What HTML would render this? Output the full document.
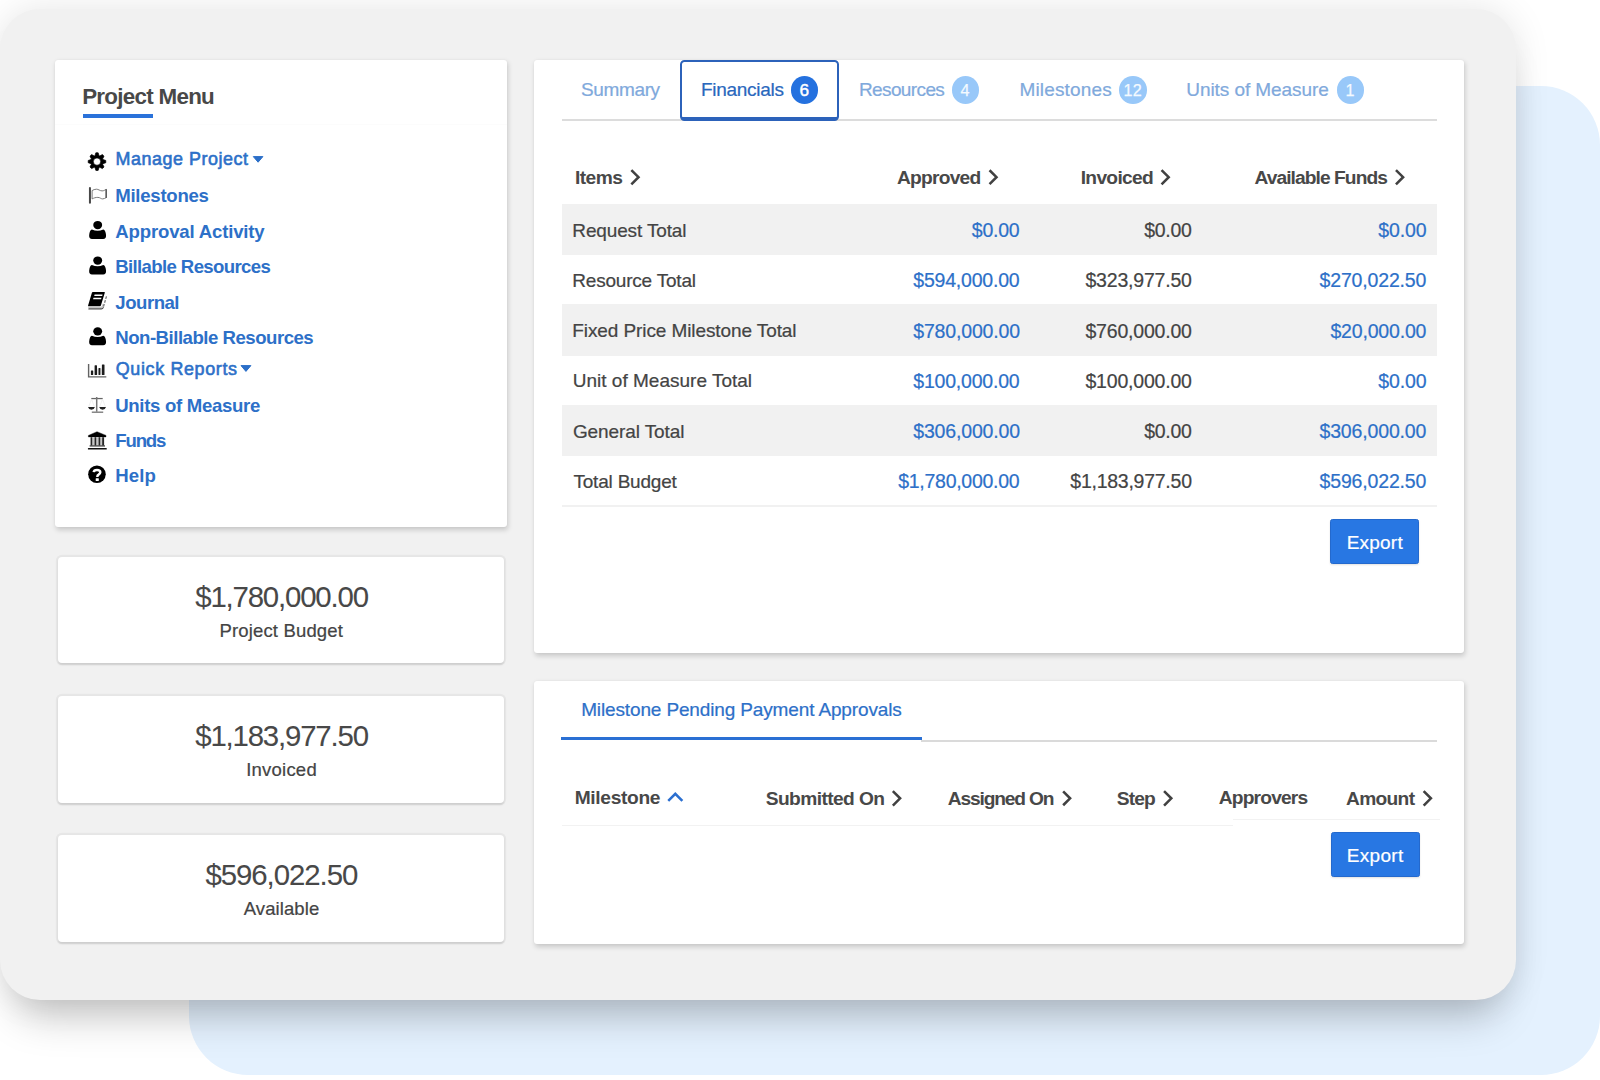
<!DOCTYPE html>
<html lang="en">
<head>
<meta charset="utf-8">
<title>Project Financials</title>
<style>
html,body{margin:0;padding:0}
body{width:1600px;height:1080px;position:relative;overflow:hidden;background:#fff;font-family:"Liberation Sans",sans-serif}
.a{position:absolute;box-sizing:border-box}
.t{position:absolute;white-space:nowrap;display:block;margin:0;padding:0;font-weight:400;text-decoration:none}
.bluebg{left:188.5px;top:86.3px;width:1411.2px;height:989.2px;border-radius:59px;background:#e4f1fe}
.panel{left:-0.3px;top:8.8px;width:1516.4px;height:991.3px;border-radius:40px;background:#f1f1f1;box-shadow:0 32px 42px -16px rgba(0,0,0,.22),0 0 36px rgba(0,0,0,.10)}
.card{background:#fff;border-radius:3px;box-shadow:1px 2.5px 5px rgba(0,0,0,.17),0 0 1.5px rgba(0,0,0,.06)}
.stat{background:#fff;border-radius:4px;box-shadow:0 0 0 2.2px rgba(0,0,0,.04),0 1.5px 2px rgba(0,0,0,.11)}
.row{left:561.5px;width:875.6px;background:#f1f1f1}
.btn{background:#2877e3;border:1px solid #2469cd;border-radius:2.5px;box-shadow:0 1px 2px rgba(0,0,0,.12)}
.badge{width:27.5px;height:27.5px;border-radius:50%;background:#98c8f9}
.badge.on{background:#2471df}
svg.a{overflow:visible}
</style>
</head>
<body>
<div class="a bluebg"></div>
<div class="a panel"></div>
<nav id="project-menu" aria-label="Project Menu">
<div class="a card" style="left:55.3px;top:60px;width:451.7px;height:467px"></div>
<div class="a" style="left:82.7px;top:114px;width:70.3px;height:3.9px;background:#2a72da"></div>

<div class="a" style="left:55.3px;top:124px;width:451.7px;height:1px;background:rgba(0,0,0,.012)"></div>
<svg class="a" style="left:0;top:0" width="1600" height="1080" viewBox="0 0 1600 1080" aria-hidden="true">
<path d="M94.96 155.64 L95.85 152.82 L98.15 152.82 L99.04 155.64 L99.77 155.94 L102.39 154.58 L104.02 156.21 L102.66 158.83 L102.96 159.56 L105.78 160.45 L105.78 162.75 L102.96 163.64 L102.66 164.37 L104.02 166.99 L102.39 168.62 L99.77 167.26 L99.04 167.56 L98.15 170.38 L95.85 170.38 L94.96 167.56 L94.23 167.26 L91.61 168.62 L89.98 166.99 L91.34 164.37 L91.04 163.64 L88.22 162.75 L88.22 160.45 L91.04 159.56 L91.34 158.83 L89.98 156.21 L91.61 154.58 L94.23 155.94Z M93.30 161.60 a3.7 3.7 0 1 0 7.4 0 a3.7 3.7 0 1 0 -7.4 0Z" fill="#000" fill-rule="evenodd" stroke="#000" stroke-width="0.7" stroke-linejoin="round"/>
<rect x="88.95" y="187.1" width="2.0" height="16.7" rx="1" fill="#474747"/>
<path d="M92.1 190.6 Q94 189.3 96.4 189.2 C98.6 189.2 99.6 190.8 102.1 190.9 C103.8 190.9 105 189.9 106.2 189.4 L106.2 197.6 C105 198.2 104 198.9 102.7 198.9 C100.8 198.9 100.4 197.5 97.9 197.4 C95.6 197.3 94 198 92.1 198.9 Z" fill="none" stroke="#747474" stroke-width="0.95" stroke-linejoin="round"/>
<path d="M106.2 189.6 L106.2 197.4" stroke="#555" stroke-width="1.4" stroke-linecap="round"/>
<ellipse cx="97.70" cy="225.05" rx="4.45" ry="4.15" fill="#000"/><path d="M91.90 229.40 Q97.60 232.20 103.30 229.40 Q105.60 230.10 106.05 235.20 Q106.20 239.00 103.20 239.00 L92.00 239.00 Q89.00 239.00 89.15 235.20 Q89.60 230.10 91.90 229.40Z" fill="#000"/>
<ellipse cx="97.70" cy="260.55" rx="4.45" ry="4.15" fill="#000"/><path d="M91.90 264.90 Q97.60 267.70 103.30 264.90 Q105.60 265.60 106.05 270.70 Q106.20 274.50 103.20 274.50 L92.00 274.50 Q89.00 274.50 89.15 270.70 Q89.60 265.60 91.90 264.90Z" fill="#000"/>
<ellipse cx="97.70" cy="331.35" rx="4.45" ry="4.15" fill="#000"/><path d="M91.90 335.70 Q97.60 338.50 103.30 335.70 Q105.60 336.40 106.05 341.50 Q106.20 345.30 103.20 345.30 L92.00 345.30 Q89.00 345.30 89.15 341.50 Q89.60 336.40 91.90 335.70Z" fill="#000"/>
<path d="M92.9 292 L104.3 292 Q105.1 292 104.8 292.8 L100.9 305.5 Q100.6 306.3 99.8 306.3 L88.7 306.3 Q87.8 306.3 88.1 305.4 L91.9 292.7 Q92.1 292 92.9 292Z" fill="#000"/>
<path d="M94.6 294.5 h8.0 l-0.42 1.4 h-8.0Z M93.5 297.8 h8.0 l-0.45 1.5 h-8.0Z" fill="#fff"/>
<path d="M88.3 307.4 H100.9 Q102.1 307.4 102.5 306.2 L103.2 304" fill="none" stroke="#c4c4c4" stroke-width="1.2"/>
<path d="M88.9 308.9 H101.3 Q102.7 308.9 103.2 307.6" fill="none" stroke="#4a4a4a" stroke-width="1.2" stroke-linecap="round"/>
<path d="M103.5 306.6 L106.5 296.2" fill="none" stroke="#6e6e6e" stroke-width="1.2" stroke-dasharray="2.7 1.3" stroke-linecap="butt"/>
<path d="M88.6 363.9 V376.9 H106.3" fill="none" stroke="#636363" stroke-width="1.4"/>
<rect x="97" y="368.5" width="4.9" height="6.2" fill="#c9c9c9" opacity="0.55"/>
<rect x="90.9" y="370.5" width="2.3" height="4.4" rx="0.5" fill="#1c1c1c"/>
<rect x="94.6" y="365.3" width="2.4" height="9.6" rx="0.5" fill="#1c1c1c"/>
<rect x="98.55" y="367.9" width="1.8" height="7.0" rx="0.5" fill="#1c1c1c"/>
<rect x="101.9" y="364.5" width="2.6" height="10.4" rx="0.5" fill="#1c1c1c"/>
<path d="M91.3 398.55 H102.7" stroke="#666" stroke-width="1.25" fill="none"/>
<path d="M96.7 397 V411.7" stroke="#777" stroke-width="1.5" fill="none"/>
<path d="M91.8 412.2 H103.2" stroke="#777" stroke-width="1.35" fill="none"/>
<path d="M91.5 399.2 L88.7 406.8 M91.5 399.2 L94.4 406.8 M102.5 399.2 L99.6 406.8 M102.5 399.2 L105.4 406.8" stroke="#e9e9e9" stroke-width="0.7" fill="none"/>
<path d="M88 406.9 H94.9 Q94 409.8 91.45 409.8 Q88.9 409.8 88 406.9Z M99.2 406.9 H106 Q105.1 409.8 102.6 409.8 Q100.1 409.8 99.2 406.9Z" fill="#222"/>
<path d="M97 431.7 L106 435.4 V436.9 H88.4 V435.4Z" fill="#000" stroke="#000" stroke-width="0.4" stroke-linejoin="round"/>
<rect x="90.8" y="437.2" width="13.2" height="8.2" fill="#c6c6c6"/>
<rect x="90.6" y="437.2" width="1.6" height="8.4" fill="#262626"/>
<rect x="94.6" y="437.2" width="1.6" height="8.4" fill="#262626"/>
<rect x="98.6" y="437.2" width="1.6" height="8.4" fill="#262626"/>
<rect x="102.2" y="437.2" width="1.9" height="8.4" fill="#262626"/>
<rect x="89.6" y="445.3" width="15.4" height="1.25" fill="#3c3c3c"/>
<rect x="87.9" y="447.9" width="18.9" height="1.6" rx="0.6" fill="#111"/>
<circle cx="96.95" cy="474.2" r="8.8" fill="#000"/>
<path d="M93.7 472.2 Q93.9 469.9 97 469.9 Q100.3 469.9 100.3 472.3 Q100.3 473.6 98.6 474.6 Q97.3 475.3 97.3 476.9" fill="none" stroke="#fff" stroke-width="2.45"/>
<rect x="95.7" y="478.2" width="3.1" height="2.8" rx="0.5" fill="#fff"/>
<path d="M253.3 156.6 h9.6 l-4.8 5.6Z" fill="#2b6fc8" stroke="#2b6fc8" stroke-width="1" stroke-linejoin="round"/>
<path d="M241.0 365.6 h9.9 l-4.95 5.8Z" fill="#2b6fc8" stroke="#2b6fc8" stroke-width="1" stroke-linejoin="round"/>
</svg>
<h2 class="t" id="pm" style="left:82.17px;top:81.90px;font-size:22.4px;line-height:29px;color:#484848;letter-spacing:-0.724px;font-weight:700;">Project Menu</h2>
<a class="t" id="m0" style="left:115.42px;top:148.41px;font-size:17.9px;line-height:23px;color:#2d70c8;letter-spacing:0.567px;-webkit-text-stroke:0.6px;">Manage Project</a>
<a class="t" id="m1" style="left:115.22px;top:184.41px;font-size:18.6px;line-height:24px;color:#2d70c8;letter-spacing:-0.269px;font-weight:700;">Milestones</a>
<a class="t" id="m2" style="left:115.33px;top:219.51px;font-size:18.6px;line-height:24px;color:#2d70c8;letter-spacing:-0.181px;font-weight:700;">Approval Activity</a>
<a class="t" id="m3" style="left:115.22px;top:255.01px;font-size:18.6px;line-height:24px;color:#2d70c8;letter-spacing:-0.631px;font-weight:700;">Billable Resources</a>
<a class="t" id="m4" style="left:115.34px;top:290.51px;font-size:18.6px;line-height:24px;color:#2d70c8;letter-spacing:-0.491px;font-weight:700;">Journal</a>
<a class="t" id="m5" style="left:115.22px;top:325.80px;font-size:18.6px;line-height:24px;color:#2d70c8;letter-spacing:-0.487px;font-weight:700;">Non-Billable Resources</a>
<a class="t" id="m6" style="left:115.81px;top:358.00px;font-size:17.9px;line-height:23px;color:#2d70c8;letter-spacing:0.650px;-webkit-text-stroke:0.6px;">Quick Reports</a>
<a class="t" id="m7" style="left:115.23px;top:393.80px;font-size:18.6px;line-height:24px;color:#2d70c8;letter-spacing:-0.317px;font-weight:700;">Units of Measure</a>
<a class="t" id="m8" style="left:115.22px;top:428.91px;font-size:18.6px;line-height:24px;color:#2d70c8;letter-spacing:-1.141px;font-weight:700;">Funds</a>
<a class="t" id="m9" style="left:115.22px;top:464.30px;font-size:18.6px;line-height:24px;color:#2d70c8;letter-spacing:0.120px;font-weight:700;">Help</a>
</nav>
<section id="budget-stats" aria-label="Budget summary">
<div class="a stat" style="left:57.8px;top:556.7px;width:446.5px;height:106.6px"></div>
<div class="a stat" style="left:57.8px;top:695.7px;width:446.5px;height:107.2px"></div>
<div class="a stat" style="left:57.8px;top:834.7px;width:446.5px;height:107.1px"></div>
<span class="t" id="s0v" style="left:195.22px;top:577.50px;font-size:29.4px;line-height:38px;color:#484848;letter-spacing:-1.182px;-webkit-text-stroke:0.08px;">$1,780,000.00</span>
<span class="t" id="s0l" style="left:219.53px;top:618.81px;font-size:18.5px;line-height:24px;color:#444;letter-spacing:0.152px;-webkit-text-stroke:0.22px;">Project Budget</span>
<span class="t" id="s1v" style="left:195.22px;top:716.60px;font-size:29.4px;line-height:38px;color:#484848;letter-spacing:-1.182px;-webkit-text-stroke:0.08px;">$1,183,977.50</span>
<span class="t" id="s1l" style="left:246.16px;top:757.91px;font-size:18.5px;line-height:24px;color:#444;letter-spacing:0.230px;-webkit-text-stroke:0.22px;">Invoiced</span>
<span class="t" id="s2v" style="left:205.42px;top:855.91px;font-size:29.4px;line-height:38px;color:#484848;letter-spacing:-1.046px;-webkit-text-stroke:0.08px;">$596,022.50</span>
<span class="t" id="s2l" style="left:243.68px;top:897.01px;font-size:18.5px;line-height:24px;color:#444;letter-spacing:0.102px;-webkit-text-stroke:0.22px;">Available</span>
</section>
<section id="financials" aria-label="Financials">
<div class="a card" style="left:534px;top:60px;width:930.3px;height:592.7px"></div>
<div class="a" style="left:561.5px;top:119.4px;width:875.5px;height:2px;background:#dcdcdc"></div>
<div class="a" style="left:680.2px;top:60.2px;width:158.9px;height:60.4px;border:2.5px solid #2c62ba;border-bottom-width:4px;border-radius:4.5px;background:#fff"></div>
<div class="a badge on" style="left:790.8px;top:76px"></div>
<div class="a badge" style="left:951.8px;top:76px"></div>
<div class="a badge" style="left:1119px;top:76px"></div>
<div class="a badge" style="left:1336.5px;top:76px"></div>

<div class="a row" style="top:204px;height:51.2px"></div>
<div class="a row" style="top:304.2px;height:51.6px"></div>
<div class="a row" style="top:405px;height:51.2px"></div>
<div class="a" style="left:561.5px;top:505.4px;width:875.5px;height:1.3px;background:#f1f1f1"></div>
<div class="a btn" style="left:1330px;top:519px;width:89px;height:44.6px"></div>
<svg class="a" style="left:0;top:0" width="1600" height="1080" viewBox="0 0 1600 1080" aria-hidden="true">
<path d="M631.35 170.05 L638.50 177.20 L631.35 184.35" fill="none" stroke="#414141" stroke-width="2.55" stroke-linejoin="miter" stroke-miterlimit="6"/>
<path d="M989.55 170.25 L996.50 177.20 L989.55 184.15" fill="none" stroke="#414141" stroke-width="2.55" stroke-linejoin="miter" stroke-miterlimit="6"/>
<path d="M1161.55 170.05 L1168.70 177.20 L1161.55 184.35" fill="none" stroke="#414141" stroke-width="2.55" stroke-linejoin="miter" stroke-miterlimit="6"/>
<path d="M1395.95 170.05 L1403.10 177.20 L1395.95 184.35" fill="none" stroke="#414141" stroke-width="2.55" stroke-linejoin="miter" stroke-miterlimit="6"/>
</svg>
<a class="t" id="tb0" style="left:581.07px;top:76.51px;font-size:19.0px;line-height:25px;color:#80a9dc;letter-spacing:-0.376px;-webkit-text-stroke:0.22px;">Summary</a>
<a class="t" id="tb1" style="left:701.01px;top:76.51px;font-size:19.0px;line-height:25px;color:#2a68bd;letter-spacing:-0.295px;-webkit-text-stroke:0.22px;">Financials</a>
<a class="t" id="tb2" style="left:859.04px;top:76.51px;font-size:19.0px;line-height:25px;color:#80a9dc;letter-spacing:-0.628px;-webkit-text-stroke:0.22px;">Resources</a>
<a class="t" id="tb3" style="left:1019.44px;top:76.51px;font-size:19.0px;line-height:25px;color:#80a9dc;letter-spacing:0.153px;-webkit-text-stroke:0.22px;">Milestones</a>
<a class="t" id="tb4" style="left:1186.23px;top:76.51px;font-size:19.0px;line-height:25px;color:#80a9dc;letter-spacing:-0.063px;-webkit-text-stroke:0.22px;">Units of Measure</a>
<span class="t" id="h0" style="left:574.91px;top:164.90px;font-size:19.2px;line-height:25px;color:#484848;letter-spacing:-0.510px;font-weight:700;">Items</span>
<span class="t" id="h1" style="left:897.02px;top:164.90px;font-size:19.2px;line-height:25px;color:#484848;letter-spacing:-0.774px;font-weight:700;">Approved</span>
<span class="t" id="h2" style="left:1080.71px;top:164.90px;font-size:19.2px;line-height:25px;color:#484848;letter-spacing:-0.689px;font-weight:700;">Invoiced</span>
<span class="t" id="h3" style="left:1254.41px;top:164.90px;font-size:19.2px;line-height:25px;color:#484848;letter-spacing:-0.922px;font-weight:700;">Available Funds</span>
<span class="t" id="r0l" style="left:572.32px;top:217.66px;font-size:19.0px;line-height:25px;color:#444;letter-spacing:-0.140px;-webkit-text-stroke:0.22px;">Request Total</span>
<span class="t" id="r0a" style="left:971.76px;top:218.01px;font-size:19.5px;line-height:25px;color:#2d70c8;letter-spacing:-0.208px;-webkit-text-stroke:0.22px;">$0.00</span>
<span class="t" id="r0b" style="left:1144.14px;top:218.01px;font-size:19.5px;line-height:25px;color:#444;letter-spacing:-0.267px;-webkit-text-stroke:0.22px;">$0.00</span>
<span class="t" id="r0c" style="left:1378.22px;top:218.01px;font-size:19.5px;line-height:25px;color:#2d70c8;letter-spacing:-0.134px;-webkit-text-stroke:0.22px;">$0.00</span>
<span class="t" id="r1l" style="left:572.32px;top:267.91px;font-size:19.0px;line-height:25px;color:#444;letter-spacing:-0.207px;-webkit-text-stroke:0.22px;">Resource Total</span>
<span class="t" id="r1a" style="left:913.24px;top:268.26px;font-size:19.5px;line-height:25px;color:#2d70c8;letter-spacing:-0.202px;-webkit-text-stroke:0.22px;">$594,000.00</span>
<span class="t" id="r1b" style="left:1085.43px;top:268.26px;font-size:19.5px;line-height:25px;color:#444;letter-spacing:-0.191px;-webkit-text-stroke:0.22px;">$323,977.50</span>
<span class="t" id="r1c" style="left:1319.51px;top:268.26px;font-size:19.5px;line-height:25px;color:#2d70c8;letter-spacing:-0.156px;-webkit-text-stroke:0.22px;">$270,022.50</span>
<span class="t" id="r2l" style="left:572.32px;top:318.16px;font-size:19.0px;line-height:25px;color:#444;letter-spacing:-0.095px;-webkit-text-stroke:0.22px;">Fixed Price Milestone Total</span>
<span class="t" id="r2a" style="left:913.22px;top:318.51px;font-size:19.5px;line-height:25px;color:#2d70c8;letter-spacing:-0.157px;-webkit-text-stroke:0.22px;">$780,000.00</span>
<span class="t" id="r2b" style="left:1085.43px;top:318.51px;font-size:19.5px;line-height:25px;color:#444;letter-spacing:-0.193px;-webkit-text-stroke:0.22px;">$760,000.00</span>
<span class="t" id="r2c" style="left:1330.45px;top:318.51px;font-size:19.5px;line-height:25px;color:#2d70c8;letter-spacing:-0.174px;-webkit-text-stroke:0.22px;">$20,000.00</span>
<span class="t" id="r3l" style="left:572.76px;top:368.41px;font-size:19.0px;line-height:25px;color:#444;letter-spacing:0.006px;-webkit-text-stroke:0.22px;">Unit of Measure Total</span>
<span class="t" id="r3a" style="left:913.24px;top:368.76px;font-size:19.5px;line-height:25px;color:#2d70c8;letter-spacing:-0.202px;-webkit-text-stroke:0.22px;">$100,000.00</span>
<span class="t" id="r3b" style="left:1085.43px;top:368.76px;font-size:19.5px;line-height:25px;color:#444;letter-spacing:-0.191px;-webkit-text-stroke:0.22px;">$100,000.00</span>
<span class="t" id="r3c" style="left:1378.24px;top:368.76px;font-size:19.5px;line-height:25px;color:#2d70c8;letter-spacing:-0.134px;-webkit-text-stroke:0.22px;">$0.00</span>
<span class="t" id="r4l" style="left:572.91px;top:418.66px;font-size:19.0px;line-height:25px;color:#444;letter-spacing:-0.099px;-webkit-text-stroke:0.22px;">General Total</span>
<span class="t" id="r4a" style="left:913.22px;top:419.01px;font-size:19.5px;line-height:25px;color:#2d70c8;letter-spacing:-0.157px;-webkit-text-stroke:0.22px;">$306,000.00</span>
<span class="t" id="r4b" style="left:1144.14px;top:419.01px;font-size:19.5px;line-height:25px;color:#444;letter-spacing:-0.267px;-webkit-text-stroke:0.22px;">$0.00</span>
<span class="t" id="r4c" style="left:1319.49px;top:419.01px;font-size:19.5px;line-height:25px;color:#2d70c8;letter-spacing:-0.156px;-webkit-text-stroke:0.22px;">$306,000.00</span>
<span class="t" id="r5l" style="left:573.43px;top:468.91px;font-size:19.0px;line-height:25px;color:#444;letter-spacing:-0.198px;-webkit-text-stroke:0.22px;">Total Budget</span>
<span class="t" id="r5a" style="left:898.20px;top:469.26px;font-size:19.5px;line-height:25px;color:#2d70c8;letter-spacing:-0.268px;-webkit-text-stroke:0.22px;">$1,780,000.00</span>
<span class="t" id="r5b" style="left:1070.33px;top:469.26px;font-size:19.5px;line-height:25px;color:#444;letter-spacing:-0.255px;-webkit-text-stroke:0.22px;">$1,183,977.50</span>
<span class="t" id="r5c" style="left:1319.51px;top:469.26px;font-size:19.5px;line-height:25px;color:#2d70c8;letter-spacing:-0.156px;-webkit-text-stroke:0.22px;">$596,022.50</span>
<span class="t" id="ex0" style="left:1346.64px;top:529.91px;font-size:19.0px;line-height:25px;color:#fff;letter-spacing:0.229px;-webkit-text-stroke:0.22px;">Export</span>
<span class="t" id="bg1" style="left:799.59px;top:79.01px;font-size:17.2px;line-height:22px;color:#fff;letter-spacing:0.000px;-webkit-text-stroke:0.45px;">6</span>
<span class="t" id="bg2" style="left:960.46px;top:79.81px;font-size:16.2px;line-height:21px;color:#f4faff;letter-spacing:0.000px;-webkit-text-stroke:0.25px;">4</span>
<span class="t" id="bg3" style="left:1123.53px;top:79.81px;font-size:16.2px;line-height:21px;color:#f4faff;letter-spacing:0.186px;-webkit-text-stroke:0.25px;">12</span>
<span class="t" id="bg4" style="left:1345.41px;top:79.81px;font-size:16.2px;line-height:21px;color:#f4faff;letter-spacing:0.000px;-webkit-text-stroke:0.25px;">1</span>
</section>
<section id="pending-approvals" aria-label="Milestone Pending Payment Approvals">
<div class="a card" style="left:534px;top:680.6px;width:930.3px;height:263px"></div>
<div class="a" style="left:921px;top:740px;width:516px;height:1.6px;background:#dadada"></div>
<div class="a" style="left:561.3px;top:737.2px;width:360.7px;height:3.3px;background:#2a70d4"></div>
<div class="a" style="left:561.5px;top:824.5px;width:671px;height:1.2px;background:#f2f2f2"></div>
<div class="a" style="left:1232.5px;top:818.6px;width:207.5px;height:1.2px;background:#f2f2f2"></div>
<div class="a btn" style="left:1330.8px;top:831.8px;width:89px;height:45px"></div>
<svg class="a" style="left:0;top:0" width="1600" height="1080" viewBox="0 0 1600 1080" aria-hidden="true">
<path d="M668.25 800.95 L675.30 793.90 L682.35 800.95" fill="none" stroke="#2b6fd0" stroke-width="2.55" stroke-linejoin="miter" stroke-miterlimit="6"/>
<path d="M892.85 791.05 L900.10 798.30 L892.85 805.55" fill="none" stroke="#414141" stroke-width="2.55" stroke-linejoin="miter" stroke-miterlimit="6"/>
<path d="M1063.15 791.35 L1070.10 798.30 L1063.15 805.25" fill="none" stroke="#414141" stroke-width="2.55" stroke-linejoin="miter" stroke-miterlimit="6"/>
<path d="M1164.05 791.05 L1171.30 798.30 L1164.05 805.55" fill="none" stroke="#414141" stroke-width="2.55" stroke-linejoin="miter" stroke-miterlimit="6"/>
<path d="M1423.65 791.05 L1430.90 798.30 L1423.65 805.55" fill="none" stroke="#414141" stroke-width="2.55" stroke-linejoin="miter" stroke-miterlimit="6"/>
</svg>
<span class="t" id="ex1" style="left:1346.82px;top:843.22px;font-size:19.0px;line-height:25px;color:#fff;letter-spacing:0.310px;-webkit-text-stroke:0.22px;">Export</span>
<a class="t" id="bt" style="left:581.18px;top:697.30px;font-size:19.0px;line-height:25px;color:#2d70c8;letter-spacing:-0.138px;-webkit-text-stroke:0.22px;">Milestone Pending Payment Approvals</a>
<span class="t" id="b0" style="left:574.70px;top:784.81px;font-size:19.2px;line-height:25px;color:#484848;letter-spacing:-0.329px;font-weight:700;">Milestone</span>
<span class="t" id="b1" style="left:765.81px;top:785.50px;font-size:19.2px;line-height:25px;color:#484848;letter-spacing:-0.600px;font-weight:700;">Submitted On</span>
<span class="t" id="b2" style="left:947.83px;top:785.50px;font-size:19.2px;line-height:25px;color:#484848;letter-spacing:-1.172px;font-weight:700;">Assigned On</span>
<span class="t" id="b3" style="left:1116.81px;top:785.50px;font-size:19.2px;line-height:25px;color:#484848;letter-spacing:-0.851px;font-weight:700;">Step</span>
<span class="t" id="b4" style="left:1218.82px;top:785.21px;font-size:19.2px;line-height:25px;color:#484848;letter-spacing:-0.831px;font-weight:700;">Approvers</span>
<span class="t" id="b5" style="left:1346.02px;top:785.50px;font-size:19.2px;line-height:25px;color:#484848;letter-spacing:-0.692px;font-weight:700;">Amount</span>
</section>
</body>
</html>
